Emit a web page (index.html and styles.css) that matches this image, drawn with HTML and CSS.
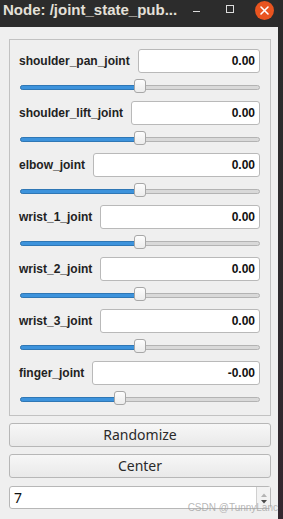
FILE: index.html
```html
<!DOCTYPE html>
<html lang="en">
  <head>
    <meta charset="UTF-8" />
    <meta name="viewport" content="width=device-width, initial-scale=1.0" />
    <title>Joint State Publisher</title>
    <link rel="stylesheet" href="styles.css">
  </head>
  <body>
    <div class="ventana">
      <div class="titlebar">
        <span class="titulo">Node: /joint_state_pub...</span>
        <span class="minimizar"></span>
        <span class="maximizar"></span>
        <span class="cerrar">
          <svg width="19" height="19" viewBox="0 0 19 19">
            <path d="M6 6 L13 13 M13 6 L6 13" stroke="#fff" stroke-width="1.6" stroke-linecap="round" />
          </svg>
        </span>
      </div>

      <div class="grupo">
        <div class="joint">
          <div class="fila"><span class="nombre">shoulder_pan_joint</span><div class="valor">0.00</div></div>
          <div class="slider"><div class="track"><div class="fill" style="--v: 0.504"></div><div class="handle" style="--v: 0.504"></div></div></div>
        </div>
        <div class="joint">
          <div class="fila"><span class="nombre">shoulder_lift_joint</span><div class="valor">0.00</div></div>
          <div class="slider"><div class="track"><div class="fill" style="--v: 0.504"></div><div class="handle" style="--v: 0.504"></div></div></div>
        </div>
        <div class="joint">
          <div class="fila"><span class="nombre">elbow_joint</span><div class="valor">0.00</div></div>
          <div class="slider"><div class="track"><div class="fill" style="--v: 0.504"></div><div class="handle" style="--v: 0.504"></div></div></div>
        </div>
        <div class="joint">
          <div class="fila"><span class="nombre">wrist_1_joint</span><div class="valor">0.00</div></div>
          <div class="slider"><div class="track"><div class="fill" style="--v: 0.504"></div><div class="handle" style="--v: 0.504"></div></div></div>
        </div>
        <div class="joint">
          <div class="fila"><span class="nombre">wrist_2_joint</span><div class="valor">0.00</div></div>
          <div class="slider"><div class="track"><div class="fill" style="--v: 0.504"></div><div class="handle" style="--v: 0.504"></div></div></div>
        </div>
        <div class="joint">
          <div class="fila"><span class="nombre">wrist_3_joint</span><div class="valor">0.00</div></div>
          <div class="slider"><div class="track"><div class="fill" style="--v: 0.504"></div><div class="handle" style="--v: 0.504"></div></div></div>
        </div>
        <div class="joint">
          <div class="fila"><span class="nombre">finger_joint</span><div class="valor">-0.00</div></div>
          <div class="slider"><div class="track"><div class="fill" style="--v: 0.417"></div><div class="handle" style="--v: 0.417"></div></div></div>
        </div>
      </div>

      <div class="boton primero">Randomize</div>
      <div class="boton">Center</div>

      <div class="spin">
        <span class="numero">7</span>
        <div class="flechas">
          <svg width="8" height="18" viewBox="0 0 8 18">
            <path d="M1 8 L4 4.5 L7 8 Z" fill="#b4b4b4" />
            <path d="M1 11 L7 11 L4 14.5 Z" fill="#4a4a4a" />
          </svg>
        </div>
      </div>
    </div>
    <div class="escritorio"></div>
    <span class="marca">CSDN @TunnyLanc</span>
  </body>
</html>
```

FILE: styles.css
```css
body {
  margin: 0;
  width: 283px;
  height: 519px;
  display: flex;
  background: #2c2a2c;
  overflow: hidden;
  position: relative;
}
.ventana {
  width: 278px;
  height: 519px;
  background: #efefef;
  display: flex;
  flex-direction: column;
}
.escritorio {
  flex: 1;
  background: linear-gradient(#2b2b2b, #2e2a2d 60%, #33272f);
}
.titlebar {
  height: 27px;
  background: #2c2c2c;
  display: flex;
  align-items: flex-start;
}
.titulo {
  width: 187px;
  height: 20px;
  line-height: 20px;
  padding-left: 3px;
  font-family: "Liberation Sans", Arial, sans-serif;
  font-weight: bold;
  font-size: 15px;
  color: #e4e0d9;
  white-space: nowrap;
}
.minimizar {
  width: 7px;
  height: 1px;
  margin-left: 3px;
  margin-top: 11px;
  background: #dcdcdc;
}
.maximizar {
  width: 6px;
  height: 6px;
  margin-left: 26px;
  margin-top: 5px;
  border: 1px solid #dcdcdc;
}
.cerrar {
  width: 19px;
  height: 19px;
  margin-left: 21px;
  margin-top: 1px;
  border-radius: 50%;
  background: #e9541f;
  display: flex;
}
.grupo {
  margin: 12px 7px 0 9px;
  border: 1px solid #c2c2c2;
  padding: 9px 10px 2px 9px;
}
.joint {
  display: flex;
  flex-direction: column;
}
.fila {
  display: flex;
  align-items: center;
  height: 24px;
}
.nombre {
  font-family: "Liberation Sans", Arial, sans-serif;
  font-weight: bold;
  font-size: 12px;
  color: #222;
  margin-right: 8px;
  white-space: nowrap;
}
.valor {
  flex: 1;
  height: 22px;
  line-height: 22px;
  background: white;
  border: 1px solid #b9b9b9;
  border-radius: 3px;
  text-align: right;
  padding-right: 4px;
  font-family: "Liberation Sans", Arial, sans-serif;
  font-weight: bold;
  font-size: 12px;
  color: #111;
}
.slider {
  height: 28px;
  display: flex;
  align-items: center;
  padding-left: 1px;
}
.track {
  flex: 1;
  height: 3px;
  border: 1px solid #b3b3b3;
  border-radius: 3px;
  background: #d9d9d9;
  position: relative;
}
.fill {
  position: absolute;
  left: -1px;
  top: -1px;
  height: 3px;
  width: calc((100% - 12px) * var(--v) + 6px);
  border: 1px solid #2f77b5;
  border-radius: 3px;
  background: #3d93dc;
}
.handle {
  position: absolute;
  top: -7px;
  left: calc((100% - 12px) * var(--v) - 1px);
  width: 10px;
  height: 12px;
  border: 1px solid #a7a7a7;
  border-radius: 3px;
  background: linear-gradient(#fdfdfd, #ececec);
}
.boton {
  margin: 7px 7px 0 9px;
  height: 22px;
  line-height: 22px;
  border: 1px solid #b7b7b7;
  border-radius: 3px;
  background: linear-gradient(#f7f7f7, #e9e9e9);
  text-align: center;
  font-family: "Noto Sans", sans-serif;
  font-size: 14px;
  color: #2a2a2a;
}
.spin {
  margin: 8px 7px 0 9px;
  height: 21px;
  border: 1px solid #b7b7b7;
  border-radius: 3px;
  background: white;
  display: flex;
  align-items: center;
}
.numero {
  flex: 1;
  padding-left: 4px;
  font-family: "Noto Sans", sans-serif;
  font-size: 14px;
  color: #111;
}
.flechas {
  width: 13px;
  height: 21px;
  border-left: 1px solid #d0d0d0;
  background: #f2f2f2;
  display: flex;
  align-items: center;
  justify-content: center;
}
.marca {
  position: absolute;
  right: 5px;
  bottom: 6px;
  font-family: "Liberation Sans", Arial, sans-serif;
  font-size: 10px;
  color: rgba(160, 160, 160, 0.75);
}
```
